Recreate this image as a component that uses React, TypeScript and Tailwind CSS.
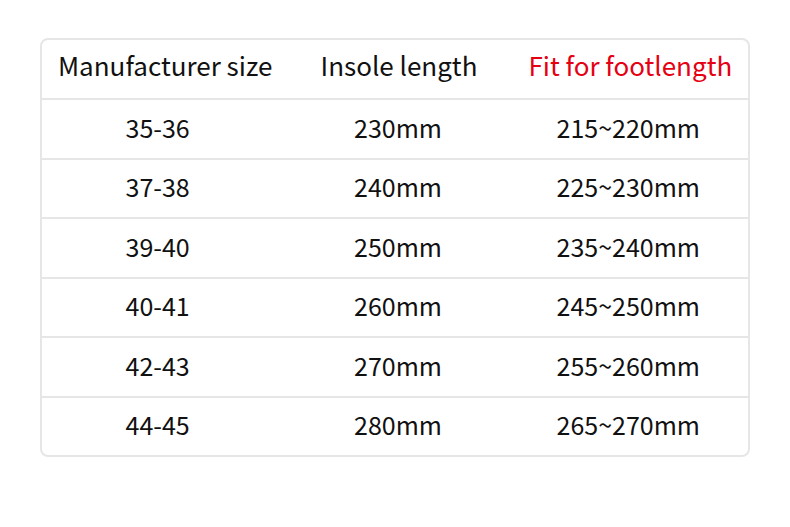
const rows = [
  ["35-36", "230mm", "215~220mm"],
  ["37-38", "240mm", "225~230mm"],
  ["39-40", "250mm", "235~240mm"],
  ["40-41", "260mm", "245~250mm"],
  ["42-43", "270mm", "255~260mm"],
  ["44-45", "280mm", "265~270mm"],
];

export default function App() {
  return (
    <div
      className="h-[527px] w-[790px] bg-white pl-[40px] pt-[38px] text-[#111]"
      style={{ fontFamily: '"Noto Sans CJK SC", "Noto Sans", sans-serif' }}
    >
      <div className="w-[710px] overflow-hidden rounded-[8px] border-2 border-[#e6e6e6]">
        <div className="grid h-[58px] grid-cols-3 items-center pb-[9px] text-[26px]">
          <div className="pl-[16px] text-left">Manufacturer size</div>
          <div className="pl-[8px] text-center">Insole length</div>
          <div className="text-center text-[#e50012]">Fit for footlength</div>
        </div>
        {rows.map((r) => (
          <div
            key={r[0]}
            className="grid h-[59.5px] grid-cols-3 items-center border-t-2 border-[#e6e6e6] pb-[3px] text-[25px]"
          >
            <div className="pr-[4px] text-center">{r[0]}</div>
            <div className="pl-[6px] text-center">{r[1]}</div>
            <div className="pr-[4px] text-center">{r[2]}</div>
          </div>
        ))}
      </div>
    </div>
  );
}
